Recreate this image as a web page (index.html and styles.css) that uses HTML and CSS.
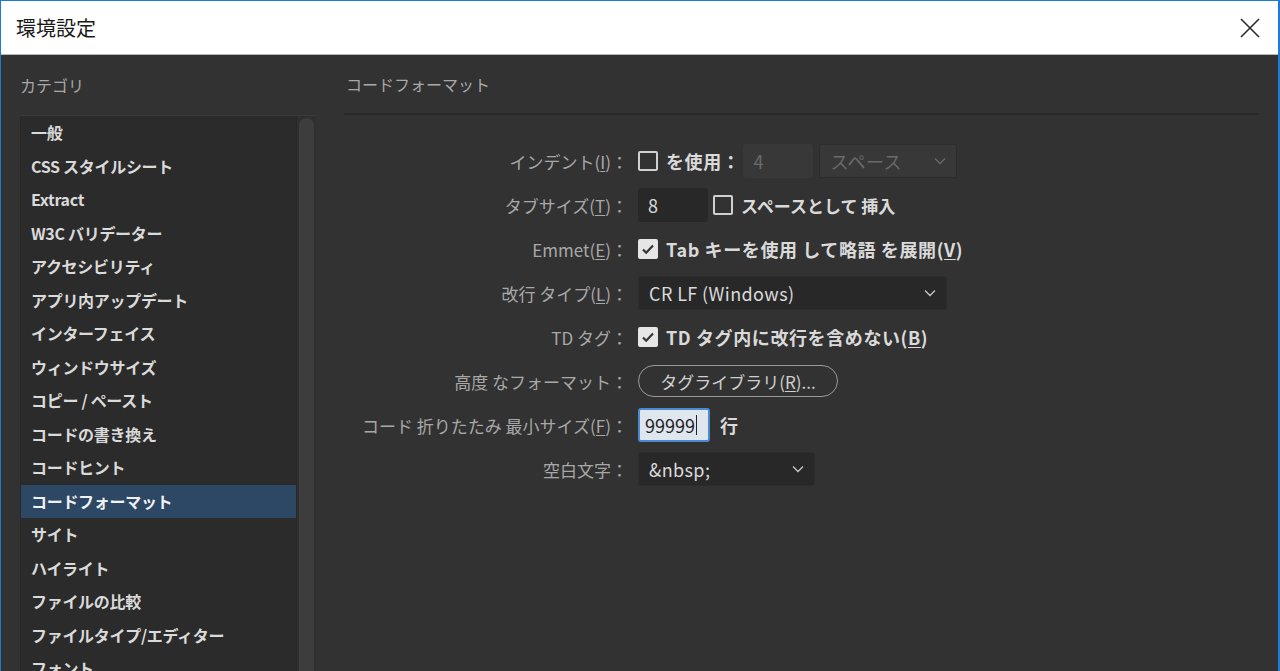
FILE: index.html
```html
<!DOCTYPE html>
<html lang="ja">
<head>
    <meta charset="UTF-8">
    <meta name="viewport" content="width=device-width, initial-scale=1.0">
    <title>環境設定</title>
    <link rel="stylesheet" href="styles.css">
</head>
<body>
    <div class="window">
        <header class="titlebar">
            <span class="title">環境設定</span>
            <svg class="close" viewBox="0 0 20 20"><path d="M1 1L19 19M19 1L1 19" fill="none" stroke="#2a2a2a" stroke-width="1.6"/></svg>
        </header>

        <div class="content">
            <aside class="sidebar">
                <div class="section-title">カテゴリ</div>
                <div class="category-box">
                    <ul class="category-list">
                        <li>一般</li>
                        <li>CSS スタイルシート</li>
                        <li>Extract</li>
                        <li>W3C バリデーター</li>
                        <li>アクセシビリティ</li>
                        <li>アプリ内アップデート</li>
                        <li>インターフェイス</li>
                        <li>ウィンドウサイズ</li>
                        <li>コピー / ペースト</li>
                        <li>コードの書き換え</li>
                        <li>コードヒント</li>
                        <li class="active">コードフォーマット</li>
                        <li>サイト</li>
                        <li>ハイライト</li>
                        <li>ファイルの比較</li>
                        <li>ファイルタイプ/エディター</li>
                        <li>フォント</li>
                    </ul>
                    <div class="scrollbar"><div class="thumb"></div></div>
                </div>
            </aside>

            <main class="panel">
                <div class="section-title panel-title">コードフォーマット</div>

                <div class="form">
                    <div class="label">インデント(<u>I</u>)：</div>
                    <div class="controls">
                        <span class="checkbox"></span>
                        <span class="text">を使用：</span>
                        <span class="field disabled field-indent">4</span>
                        <span class="select disabled select-unit">スペース
                            <svg class="chevron" viewBox="0 0 12 8"><path d="M1 1.5l5 5 5-5" fill="none" stroke="currentColor" stroke-width="1.3"/></svg>
                        </span>
                    </div>

                    <div class="label">タブサイズ(<u>T</u>)：</div>
                    <div class="controls">
                        <span class="field field-tab">8</span>
                        <span class="checkbox"></span>
                        <span class="text text-narrow">スペースとして 挿入</span>
                    </div>

                    <div class="label">Emmet(<u>E</u>)：</div>
                    <div class="controls">
                        <span class="checkbox checked">
                            <svg viewBox="0 0 16 16"><path d="M3 8.5l3.2 3.2L13 4.5" fill="none" stroke="#333" stroke-width="2.2"/></svg>
                        </span>
                        <span class="text">Tab キーを使用 して略語 を展開(<u>V</u>)</span>
                    </div>

                    <div class="label">改行 タイプ(<u>L</u>)：</div>
                    <div class="controls">
                        <span class="select select-linebreak">CR LF (Windows)
                            <svg class="chevron" viewBox="0 0 12 8"><path d="M1 1.5l5 5 5-5" fill="none" stroke="currentColor" stroke-width="1.3"/></svg>
                        </span>
                    </div>

                    <div class="label">TD タグ：</div>
                    <div class="controls">
                        <span class="checkbox checked">
                            <svg viewBox="0 0 16 16"><path d="M3 8.5l3.2 3.2L13 4.5" fill="none" stroke="#333" stroke-width="2.2"/></svg>
                        </span>
                        <span class="text">TD タグ内に改行を含めない(<u>B</u>)</span>
                    </div>

                    <div class="label">高度 なフォーマット：</div>
                    <div class="controls">
                        <span class="pill-btn">タグライブラリ(<u>R</u>)...</span>
                    </div>

                    <div class="label">コード 折りたたみ 最小サイズ(<u>F</u>)：</div>
                    <div class="controls">
                        <span class="field focused">99999<span class="caret"></span></span>
                        <span class="text">行</span>
                    </div>

                    <div class="label">空白文字：</div>
                    <div class="controls">
                        <span class="select select-space">&amp;nbsp;
                            <svg class="chevron" viewBox="0 0 12 8"><path d="M1 1.5l5 5 5-5" fill="none" stroke="currentColor" stroke-width="1.3"/></svg>
                        </span>
                    </div>
                </div>
            </main>
        </div>
    </div>
</body>
</html>
```

FILE: styles.css
```css
:root {
    --bg: #323232;
    --list-bg: #2b2b2b;
    --field-bg: #282828;
    --accent: #1c7bd4;
    --text: #dadada;
    --text-secondary: #a8a8a8;
    --selected: #2c4865;
}

* {
    margin: 0;
    padding: 0;
    box-sizing: border-box;
}

html, body {
    height: 100%;
}

body {
    font-family: "Noto Sans CJK JP", "Noto Sans", sans-serif;
    background-color: var(--bg);
    overflow: hidden;
}

.window {
    height: 100vh;
    display: flex;
    flex-direction: column;
    border-top: 1px solid var(--accent);
    border-left: 1px solid var(--accent);
    border-right: 2px solid var(--accent);
    overflow: hidden;
}

.titlebar {
    height: 54px;
    flex-shrink: 0;
    display: flex;
    align-items: center;
    justify-content: space-between;
    padding: 0 18px 0 15px;
    background-color: #fff;
    border-bottom: 1px solid #b8b8b8;
}

.title {
    font-size: 20px;
    color: #1a1a1a;
}

.close {
    width: 20px;
    height: 20px;
}

.content {
    flex: 1;
    display: flex;
    min-height: 0;
    padding-left: 19px;
}

/* category sidebar */
.sidebar {
    width: 296px;
    display: flex;
    flex-direction: column;
}

.section-title {
    height: 60px;
    flex-shrink: 0;
    display: flex;
    align-items: center;
    font-size: 16px;
    color: var(--text-secondary);
    white-space: nowrap;
}

.category-box {
    flex: 1;
    display: flex;
    min-height: 0;
    background-color: var(--list-bg);
    border-top: 1px solid #3a3a3a;
    border-left: 1px solid #282828;
}

.category-list {
    flex: 1;
    list-style: none;
}

.category-list li {
    height: 33.5px;
    line-height: 33.5px;
    padding-left: 10px;
    font-size: 16px;
    font-weight: 700;
    letter-spacing: -0.3px;
    color: var(--text);
    white-space: nowrap;
}

.category-list li.active {
    background-color: var(--selected);
    color: #f2f2f2;
}

.scrollbar {
    width: 20px;
    padding: 2px 2px 0;
    background-color: #2f2f2f;
    border-left: 1px solid #272727;
}

.thumb {
    height: 100%;
    background-color: #3d3d3d;
    border-radius: 8px 8px 0 0;
}

/* settings panel */
.panel {
    flex: 1;
    padding: 0 19px 0 28px;
}

.panel-title {
    padding-left: 2px;
    border-bottom: 2px solid #292929;
}

.form {
    display: grid;
    grid-template-columns: 284px auto;
    grid-auto-rows: 34px;
    column-gap: 10px;
    row-gap: 10px;
    padding-top: 29px;
}

.label {
    display: flex;
    align-items: center;
    justify-content: flex-end;
    font-size: 17px;
    color: var(--text-secondary);
    white-space: nowrap;
}

.controls {
    display: flex;
    align-items: center;
    gap: 8px;
    font-size: 18px;
    color: var(--text);
    white-space: nowrap;
}

u {
    text-underline-offset: 2px;
}

.text {
    font-weight: 700;
    letter-spacing: 0.6px;
}

.text-narrow {
    font-size: 17px;
    letter-spacing: 0;
}

.checkbox {
    width: 20px;
    height: 20px;
    flex-shrink: 0;
    display: flex;
    align-items: center;
    justify-content: center;
    border: 2px solid #d0d0d0;
    border-radius: 2px;
}

.checkbox.checked {
    background-color: #e6e6e6;
    border-color: #e6e6e6;
}

.checkbox svg {
    width: 16px;
    height: 16px;
}

.field,
.select {
    height: 34px;
    display: flex;
    align-items: center;
    padding: 0 10px;
    background-color: var(--field-bg);
    border-radius: 3px;
    color: var(--text);
    letter-spacing: 0.4px;
}

.select {
    justify-content: space-between;
    border: 1px solid #2c2c2c;
}

.chevron {
    width: 12px;
    height: 8px;
    color: #c8c8c8;
}

.disabled {
    background-color: #383838;
    color: #6a6a6a;
}

.disabled .chevron {
    color: #6a6a6a;
}

.field-indent {
    width: 70px;
    margin-left: -5px;
}

.select-unit {
    width: 138px;
    margin-left: -2px;
}

.field-tab {
    width: 70px;
    margin-right: -3px;
}

.select-linebreak {
    width: 309px;
}

.select-space {
    width: 177px;
}

.field.focused {
    width: 72px;
    padding: 0 5px;
    margin-right: 2px;
    background-color: #dfe6ee;
    border: 2px solid #4a8ad0;
    color: #1e1e1e;
    letter-spacing: 0;
}

.caret {
    width: 1.5px;
    height: 20px;
    margin-left: 1px;
    background-color: #222;
}

.pill-btn {
    width: 200px;
    height: 32px;
    display: flex;
    align-items: center;
    justify-content: center;
    border: 1.5px solid #9a9a9a;
    border-radius: 16px;
    font-size: 17px;
    color: #cfcfcf;
}
```
